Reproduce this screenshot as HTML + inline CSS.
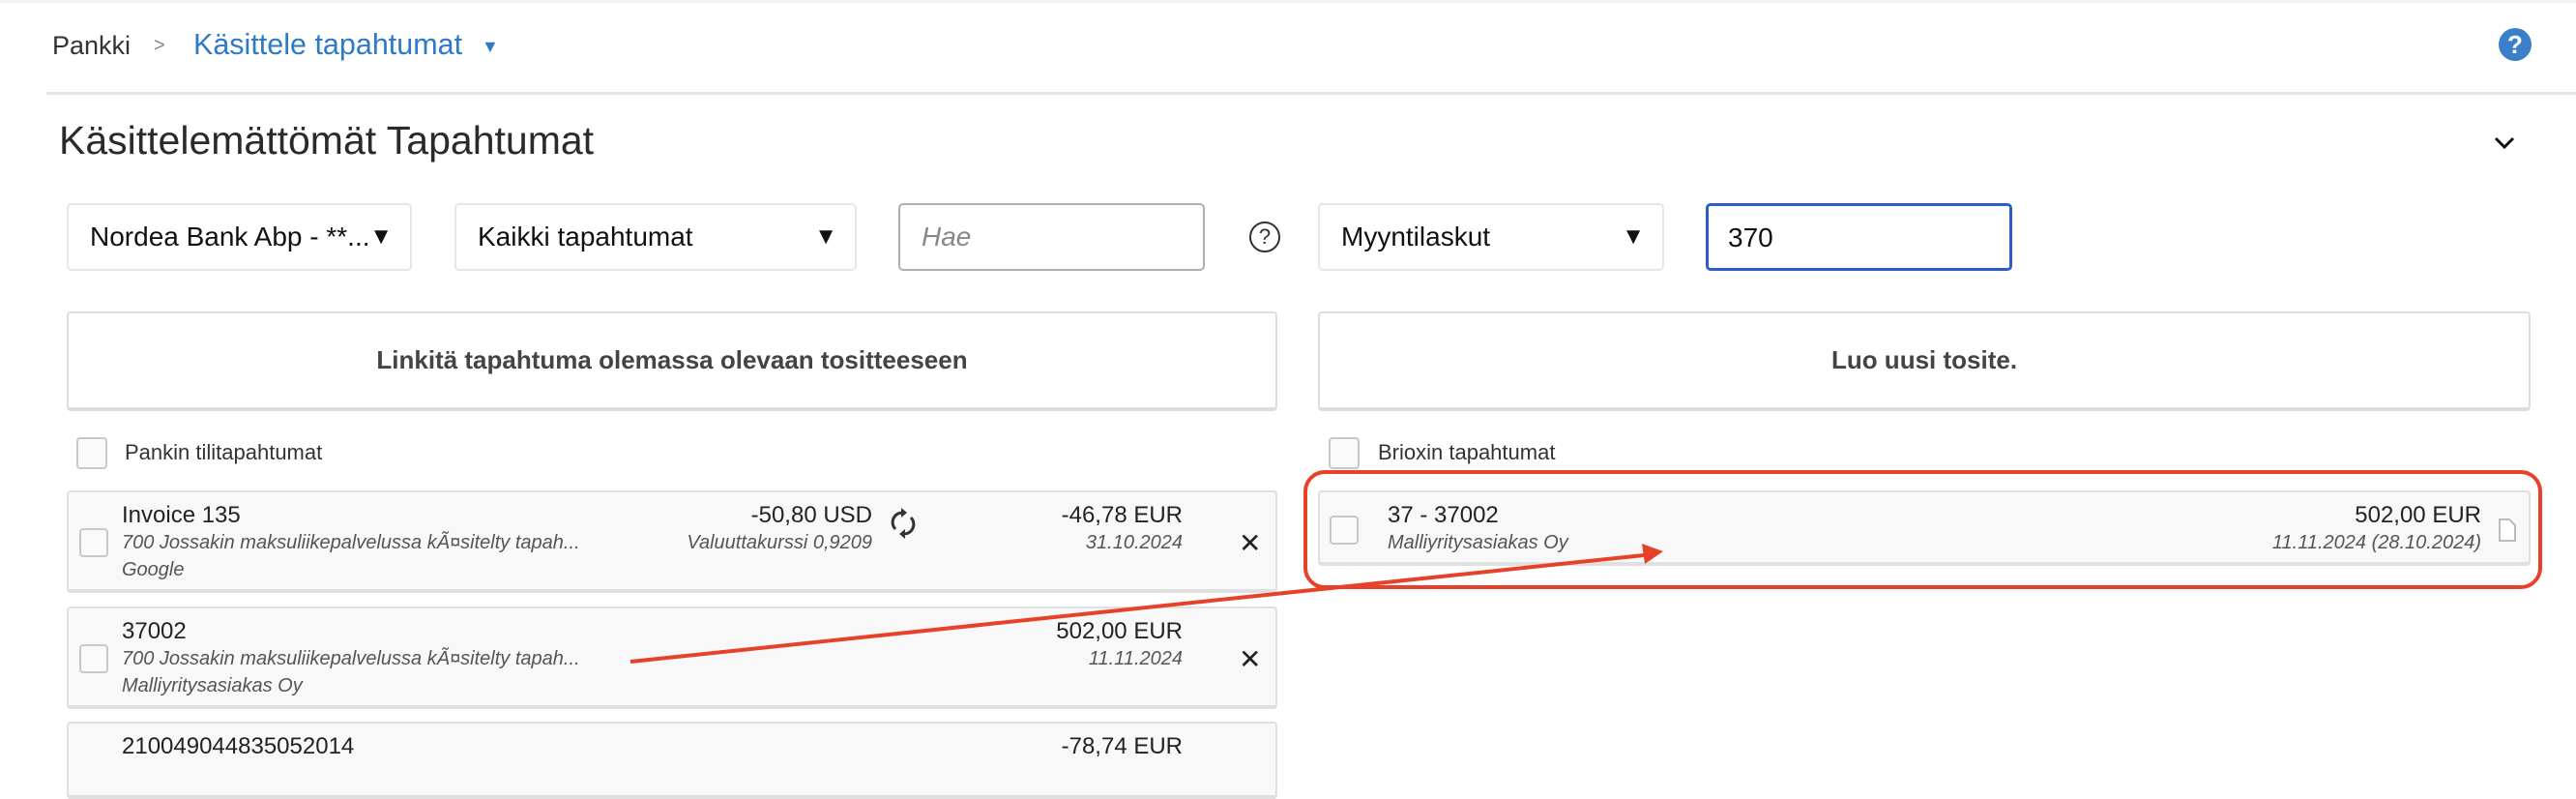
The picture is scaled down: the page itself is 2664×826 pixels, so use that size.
<!DOCTYPE html>
<html><head><meta charset="utf-8"><style>
*{box-sizing:border-box;margin:0;padding:0}
body{width:2664px;height:786px;overflow:hidden;background:#fff;font-family:"Liberation Sans",Arial,sans-serif;position:relative;color:#333}
.a{position:absolute;white-space:nowrap}
.sel{position:absolute;top:210px;height:70px;border:2px solid #e6e6e6;border-radius:5px;background:#fff;font-size:28px;color:#111;padding-left:22px;line-height:66px}
.sel .ar{position:absolute;right:18px;top:0;font-size:24px}
.btn{position:absolute;top:322px;height:103px;border:2px solid #ddd;border-bottom-width:4px;border-radius:4px;background:#fff;font-weight:bold;font-size:26px;color:#444;text-align:center;line-height:97px}
.cb{position:absolute;width:30px;height:30px;border:2px solid #c8c8c8;border-radius:4px;background:#fafafa}
.card{position:absolute;background:#f8f8f8;border:2px solid #e0e0e0;border-bottom-width:4px;border-radius:4px}
.t{font-size:24px;color:#222}
.i{font-size:20px;font-style:italic;color:#555}
.r{text-align:right}
</style></head><body>
<div style="position:absolute;left:0;top:0;width:2664px;height:3px;background:#f2f2f2"></div>
<div class="a" style="left:54px;top:32px;font-size:27px;color:#333">Pankki</div>
<div class="a" style="left:159px;top:36px;font-size:20px;color:#888">&gt;</div>
<div class="a" style="left:200px;top:29px;font-size:30.5px;color:#2d7ac6">Käsittele tapahtumat</div>
<div class="a" style="left:498px;top:38px;font-size:18px;color:#2d7ac6">▼</div>
<div class="a" style="left:2584px;top:29px;width:34px;height:34px;border-radius:50%;background:#3a7fc8;color:#fff;font-weight:bold;font-size:26px;text-align:center;line-height:34px">?</div>
<div style="position:absolute;left:48px;top:95px;right:0;height:3px;background:#e6e6e6"></div>
<div class="a" style="left:61px;top:122px;font-size:41px;color:#2a2a2a">Käsittelemättömät Tapahtumat</div>
<svg class="a" style="left:2579px;top:140px" width="22" height="16"><path d="M2 3 L11 12 L20 3" stroke="#111" stroke-width="3" fill="none"/></svg>

<div class="sel" style="left:69px;width:357px">Nordea Bank Abp - **...<span class="ar">▼</span></div>
<div class="sel" style="left:470px;width:416px">Kaikki tapahtumat<span class="ar">▼</span></div>
<div class="sel" style="left:929px;width:317px;border-color:#aab0b6;border-width:2px;color:#888;font-style:italic">Hae</div>
<div class="a" style="left:1292px;top:229px;width:32px;height:32px;border:2.5px solid #333;border-radius:50%;font-size:22px;text-align:center;line-height:27px;color:#333">?</div>
<div class="sel" style="left:1363px;width:358px">Myyntilaskut<span class="ar">▼</span></div>
<div class="sel" style="left:1764px;width:317px;border:3px solid #2b5fc7;padding-left:20px">370</div>

<div class="btn" style="left:69px;width:1252px">Linkitä tapahtuma olemassa olevaan tositteeseen</div>
<div class="btn" style="left:1363px;width:1254px">Luo uusi tosite.</div>

<div class="cb" style="left:79px;top:452px;width:32px;height:33px"></div>
<div class="a" style="left:129px;top:455px;font-size:22px;color:#333">Pankin tilitapahtumat</div>

<div class="card" style="left:69px;top:507px;width:1252px;height:106px">
 <div class="cb" style="left:11px;top:37px"></div>
 <div class="a t" style="left:55px;top:10px">Invoice 135</div>
 <div class="a i" style="left:55px;top:41px">700 Jossakin maksuliikepalvelussa kÃ¤sitelty tapah...</div>
 <div class="a i" style="left:55px;top:69px">Google</div>
 <div class="a t r" style="right:417px;top:10px">-50,80 USD</div>
 <div class="a i r" style="right:417px;top:41px">Valuuttakurssi 0,9209</div>
 <svg class="a" style="left:848px;top:14px" width="30" height="36" viewBox="0 0 30 36"><path d="M7 24 A10 10 0 0 1 15 7" stroke="#333" stroke-width="3" fill="none"/><path d="M13 2 L19 7 L13 12Z" fill="#333"/><path d="M23 12 A10 10 0 0 1 15 29" stroke="#333" stroke-width="3" fill="none"/><path d="M17 24 L11 29 L17 34Z" fill="#333"/></svg>
 <div class="a t r" style="right:96px;top:10px">-46,78 EUR</div>
 <div class="a i r" style="right:96px;top:41px">31.10.2024</div>
 <div class="a" style="left:1210px;top:36px;font-size:28px;color:#222">✕</div>
</div>

<div class="card" style="left:69px;top:627px;width:1252px;height:106px">
 <div class="cb" style="left:11px;top:37px"></div>
 <div class="a t" style="left:55px;top:10px">37002</div>
 <div class="a i" style="left:55px;top:41px">700 Jossakin maksuliikepalvelussa kÃ¤sitelty tapah...</div>
 <div class="a i" style="left:55px;top:69px">Malliyritysasiakas Oy</div>
 <div class="a t r" style="right:96px;top:10px">502,00 EUR</div>
 <div class="a i r" style="right:96px;top:41px">11.11.2024</div>
 <div class="a" style="left:1210px;top:36px;font-size:28px;color:#222">✕</div>
</div>

<div class="card" style="left:69px;top:746px;width:1252px;height:80px">
 <div class="a t" style="left:55px;top:10px">210049044835052014</div>
 <div class="a t r" style="right:96px;top:10px">-78,74 EUR</div>
</div>

<div class="cb" style="left:1374px;top:452px;width:32px;height:33px"></div>
<div class="a" style="left:1425px;top:455px;font-size:22px;color:#333">Brioxin tapahtumat</div>

<div class="card" style="left:1363px;top:507px;width:1254px;height:78px">
 <div class="cb" style="left:10px;top:24px"></div>
 <div class="a t" style="left:70px;top:10px">37 - 37002</div>
 <div class="a i" style="left:70px;top:41px">Malliyritysasiakas Oy</div>
 <div class="a t r" style="right:49px;top:10px">502,00 EUR</div>
 <div class="a i r" style="right:49px;top:41px">11.11.2024 (28.10.2024)</div>
 <svg class="a" style="left:1218px;top:26px" width="20" height="26"><path d="M2 2 H12 L18 8 V24 H2Z" stroke="#bbb" stroke-width="2" fill="#fff"/></svg>
</div>

<svg class="a" style="left:0;top:0" width="2664" height="786">
 <rect x="1350" y="488" width="1277" height="119" rx="20" ry="20" stroke="#e8412a" stroke-width="4" fill="none"/>
 <line x1="652" y1="684" x2="1700" y2="574" stroke="#e8412a" stroke-width="4"/>
 <path d="M1720 570 L1698 562 L1701 583Z" fill="#e8412a"/>
</svg>
</body></html>
